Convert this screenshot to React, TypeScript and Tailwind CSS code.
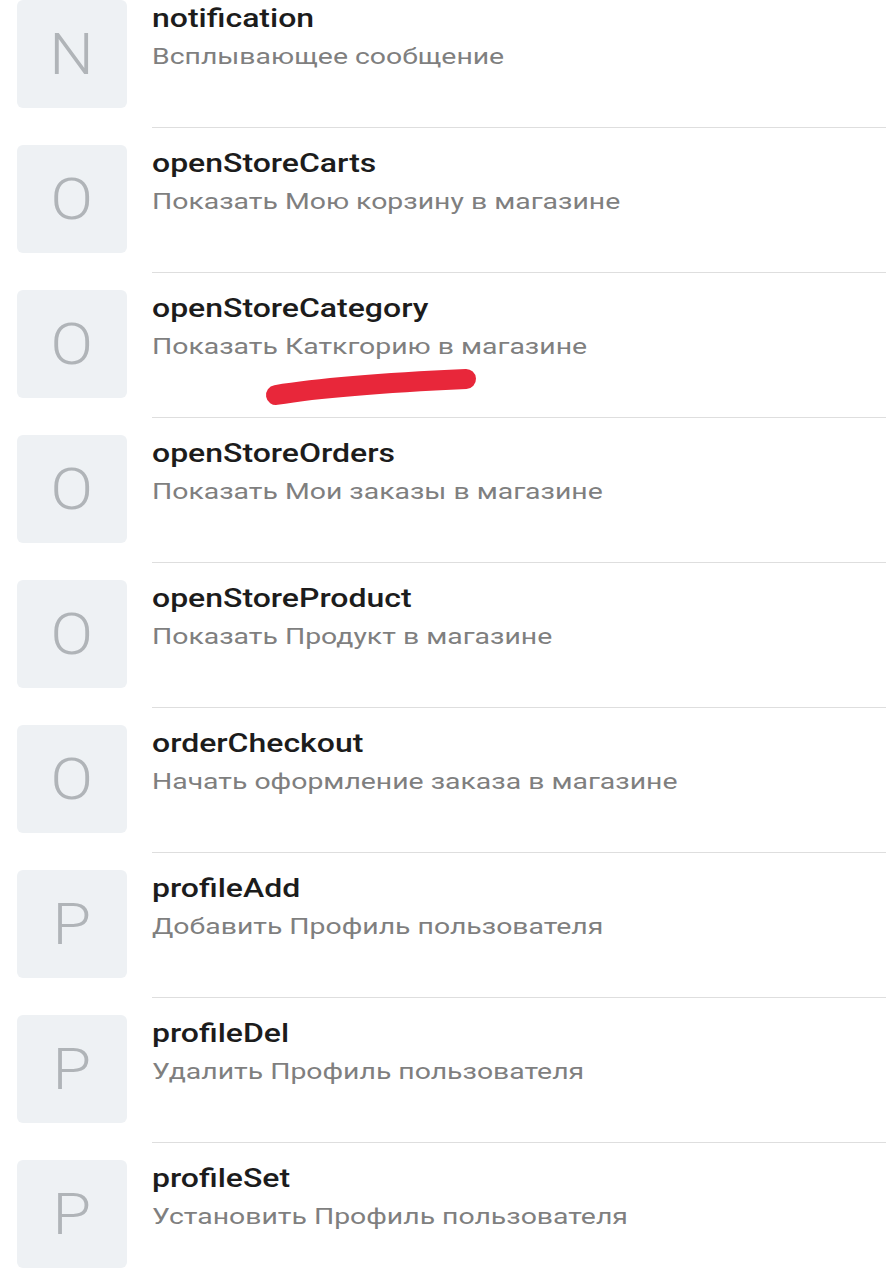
import React from "react";

const items = [
  { letter: "N", name: "notification", desc: "Всплывающее сообщение" },
  { letter: "O", name: "openStoreCarts", desc: "Показать Мою корзину в магазине" },
  { letter: "O", name: "openStoreCategory", desc: "Показать Каткгорию в магазине" },
  { letter: "O", name: "openStoreOrders", desc: "Показать Мои заказы в магазине" },
  { letter: "O", name: "openStoreProduct", desc: "Показать Продукт в магазине" },
  { letter: "O", name: "orderCheckout", desc: "Начать оформление заказа в магазине" },
  { letter: "P", name: "profileAdd", desc: "Добавить Профиль пользователя" },
  { letter: "P", name: "profileDel", desc: "Удалить Профиль пользователя" },
  { letter: "P", name: "profileSet", desc: "Установить Профиль пользователя" },
];

const App = () => {
  return (
    <div
      className="relative w-[886px] h-[1280px] overflow-hidden bg-white"
      style={{ fontFamily: "Roboto, 'Noto Sans', sans-serif" }}
    >
      <div className="-mt-[17px]">
        {items.map((item, i) => (
          <div key={i} className="flex pl-[17px]">
            <div className="pt-[17px] pb-[20px]">
              <div className="w-[110px] h-[108px] rounded-[6px] bg-[#eef1f4] flex items-center justify-center text-[58px] font-light text-[#b0b4b8] leading-none">
                <span className="inline-block scale-x-[1.08]">{item.letter}</span>
              </div>
            </div>
            <div className="flex-1 ml-[25px] border-b border-[#dedede] pt-[17px] whitespace-nowrap">
              <div className="text-[26px] font-medium text-[#1c1c1c] leading-[34px] mt-[1px]">
                <span className="inline-block origin-left scale-x-[1.23]">{item.name}</span>
              </div>
              <div className="text-[22px] text-[#7f7f7f] leading-[43px]">
                <span className="inline-block origin-left scale-x-[1.29]">{item.desc}</span>
              </div>
            </div>
          </div>
        ))}
      </div>

      {/* red marker stroke */}
      <svg
        className="absolute left-0 top-0 pointer-events-none"
        width="886"
        height="1280"
      >
        <path
          d="M276 395 C 330 386, 400 382, 466 379"
          fill="none"
          stroke="#e8273a"
          strokeWidth="20"
          strokeLinecap="round"
        />
      </svg>
    </div>
  );
};

export default App;
